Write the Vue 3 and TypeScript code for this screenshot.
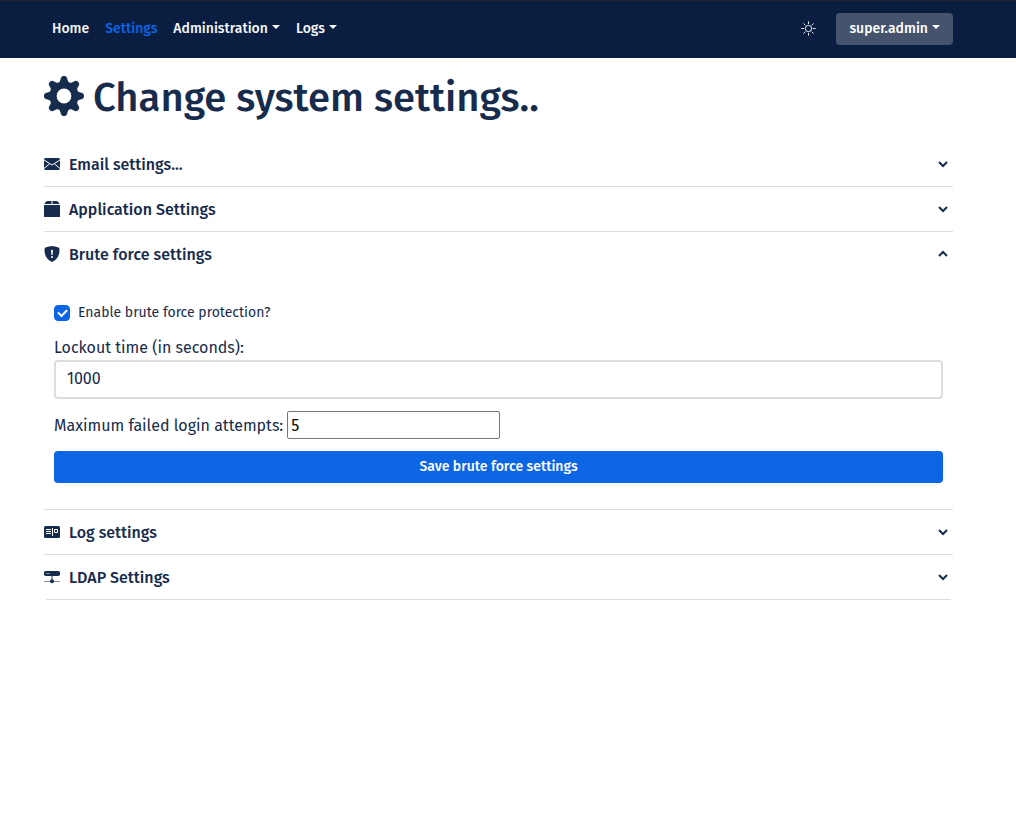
<script setup lang="ts">
import { ref } from 'vue'

interface Section {
  id: string
  title: string
}

const sections: Section[] = [
  { id: 'email', title: 'Email settings...' },
  { id: 'application', title: 'Application Settings' },
  { id: 'brute', title: 'Brute force settings' },
  { id: 'log', title: 'Log settings' },
  { id: 'ldap', title: 'LDAP Settings' },
]

const openSection = ref<string>('brute')
const bruteEnabled = ref<boolean>(true)
const lockoutTime = ref<string>('1000')
const maxAttempts = ref<string>('5')

function toggle(id: string): void {
  openSection.value = openSection.value === id ? '' : id
}

function gearOutline(): string {
  const points: string[] = []
  for (let i = 0; i < 240; i++) {
    const angle = (i / 240) * Math.PI * 2
    const radius = 17.3 + 3 * (Math.cos(8 * angle) - 0.11 * Math.cos(24 * angle))
    points.push(`${(20 + radius * Math.cos(angle)).toFixed(2)} ${(20 + radius * Math.sin(angle)).toFixed(2)}`)
  }
  return `M${points.join('L')}ZM27.4 20a7.4 7.4 0 1 0-14.8 0a7.4 7.4 0 1 0 14.8 0Z`
}
const gearPath = gearOutline()
</script>

<template>
  <header class="navbar">
    <nav class="links">
      <a href="#home">Home</a>
      <a href="#settings" class="active">Settings</a>
      <a href="#administration">Administration<span class="caret"></span></a>
      <a href="#logs">Logs<span class="caret"></span></a>
    </nav>
    <div class="tools">
      <button type="button" class="theme" aria-label="Toggle theme">
        <svg viewBox="0 0 16 16" width="15" height="15" fill="none" stroke="currentColor" stroke-linecap="round">
          <circle cx="8" cy="8" r="3.4" />
          <path d="M8 .8v2M8 13.2v2M.8 8h2M13.2 8h2M2.9 2.9l1.4 1.4M11.7 11.7l1.4 1.4M2.9 13.1l1.4-1.4M11.7 4.3l1.4-1.4" />
        </svg>
      </button>
      <button type="button" class="user">super.admin<span class="caret"></span></button>
    </div>
  </header>

  <main class="content">
    <h1>
      <svg class="gear" viewBox="0 0 40 40" width="40" height="40" aria-hidden="true">
        <path :d="gearPath" fill="currentColor" fill-rule="evenodd" />
      </svg>
      <span>Change system settings..</span>
    </h1>

    <div class="accordion">
      <section v-for="s in sections" :key="s.id" class="item">
        <button type="button" class="head" :aria-expanded="openSection === s.id" @click="toggle(s.id)">
          <svg class="icon" viewBox="0 0 16 16" width="16" height="16" aria-hidden="true">
            <template v-if="s.id === 'email'">
              <rect x="0" y="2" width="16" height="12" rx="1.5" fill="currentColor" />
              <path d="M0 4l8 5l8-5M0 12.5l5.5-4.6M16 12.5l-5.5-4.6" fill="none" stroke="#fff" />
            </template>
            <template v-else-if="s.id === 'application'">
              <path d="M3.5 0h4v3H0.2L2 .8Q2.700 0 3.500 0zM8.500 0H12.500Q13.300 0 14 .8L15.800 3H8.500zM0 4h16v11.500q0 .5-.5.5H.5q-.5 0-.5-.5z" fill="currentColor" />
            </template>
            <template v-else-if="s.id === 'brute'">
              <path d="M8 0C6.500 0 3.500 1 1.600 1.600C.9 1.800.6 2.100.6 2.800C0 8 2.300 13.500 8 16C13.700 13.500 16 8 15.400 2.800C15.400 2.100 15.100 1.800 14.400 1.600C12.500 1 9.500 0 8 0Z" fill="currentColor" />
              <path d="M7 4h2l-.4 5H7.400z" fill="#fff" />
              <circle cx="8" cy="11" r="1" fill="#fff" />
            </template>
            <template v-else-if="s.id === 'log'">
              <rect x="0" y="2" width="16" height="12" rx="1.500" fill="currentColor" />
              <path d="M2 5.500h5M2 7.500h5M2 9.500h5M8.500 4v8M10.500 5.500h3v3h-3z" fill="none" stroke="#fff" />
            </template>
            <template v-else>
              <rect x="0" y="2" width="16" height="5" rx="1.800" fill="currentColor" />
              <path d="M2 4.500h4" stroke="#8794a8" />
              <path d="M0 12.500h16" stroke="#7f8da2" />
              <path d="M8 7v5" stroke="currentColor" />
              <circle cx="8" cy="12.200" r="2" fill="currentColor" />
            </template>
          </svg>
          <span class="title">{{ s.title }}</span>
          <svg class="chevron" :class="{ up: openSection === s.id }" viewBox="0 0 10 10" width="10" height="10" aria-hidden="true">
            <path d="M1 3l4 4l4-4" fill="none" stroke="currentColor" stroke-width="2" />
          </svg>
        </button>

        <form v-if="s.id === 'brute' && openSection === 'brute'" class="body" @submit.prevent>
          <div class="check">
            <input id="enable" v-model="bruteEnabled" type="checkbox" />
            <label for="enable">Enable brute force protection?</label>
          </div>
          <label for="lockout" class="block">Lockout time (in seconds):</label>
          <input id="lockout" v-model="lockoutTime" type="text" class="wide" />
          <div class="attempts">
            <label for="attempts">Maximum failed login attempts:</label>
            <input id="attempts" v-model="maxAttempts" type="text" />
          </div>
          <button type="submit" class="save">Save brute force settings</button>
        </form>
      </section>
    </div>
  </main>
</template>

<style>
body {
  margin: 0;
  background: #fff;
}
</style>

<style scoped>
* {
  box-sizing: border-box;
}
.navbar,
.content,
button,
input {
  font-family: "Fira Sans", "Noto Sans", sans-serif;
}
.navbar {
  display: flex;
  align-items: center;
  justify-content: space-between;
  height: 58px;
  padding: 0 63px 2px 52px;
  border-top: 1px solid #212529;
  background: #0a1e42;
  font-size: 14px;
  font-weight: 500;
}
.links {
  display: flex;
  gap: 16px;
}
.links a {
  color: #f4f6f9;
  text-decoration: none;
}
.links a.active {
  color: #0d65e5;
}
.caret {
  display: inline-block;
  margin-left: 4px;
  vertical-align: 4px;
  border: 4px solid transparent;
  border-top-color: currentColor;
  border-bottom: 0;
}
.tools {
  display: flex;
  align-items: center;
  gap: 20px;
}
.theme {
  display: flex;
  padding: 0;
  border: 0;
  background: none;
  color: #f4f6f9;
}
.user {
  height: 32px;
  padding: 0 13px;
  border: 0;
  border-radius: 4px;
  background: #45536d;
  color: #fff;
  font-size: 14px;
  font-weight: 500;
}
.content {
  padding: 14px 63px 0 44px;
  color: #172b4d;
  font-size: 16px;
}
h1 {
  display: flex;
  align-items: center;
  gap: 9px;
  margin: 0 0 20px;
  font-size: 40px;
  font-weight: 500;
  line-height: 48px;
}
h1 span {
  padding-top: 2px;
}
.gear {
  margin-bottom: 2px;
}
.item {
  border-bottom: 1px solid #dadde3;
}
.item:last-child {
  margin: 0 2px;
}
.item:last-child .head {
  width: calc(100% + 4px);
  margin: 0 -2px;
}
.head {
  display: flex;
  align-items: center;
  width: 100%;
  height: 44px;
  padding: 0 5px 0 0;
  border: 0;
  background: none;
  color: inherit;
  font-size: 16px;
  font-weight: 500;
  text-align: left;
}
.icon {
  margin-right: 9px;
}
.title {
  flex: 1;
}
.chevron.up {
  transform: rotate(180deg);
}
.body {
  padding: 24px 10px 26px;
}
.check {
  display: flex;
  align-items: center;
  gap: 8px;
  height: 24px;
  margin-bottom: 12px;
  font-size: 14px;
}
.check input {
  display: grid;
  place-content: center;
  width: 16px;
  height: 16px;
  margin: 2px 0 0;
  border: 1px solid #0c66e4;
  border-radius: 4px;
  appearance: none;
}
.check input:checked {
  background: #0c66e4;
}
.check input:checked::before {
  content: "";
  width: 7px;
  height: 4px;
  margin-bottom: 2px;
  border: solid #fff;
  border-width: 0 0 2px 2px;
  transform: rotate(-45deg);
}
.block {
  display: block;
  line-height: 24px;
}
.wide {
  display: block;
  width: 100%;
  height: 39px;
  padding: 0 11px 2px;
  border: 2px solid #dadde2;
  border-radius: 4px;
  background: #fff;
  color: #172b4d;
  font-size: 16px;
}
.attempts {
  display: flex;
  align-items: center;
  gap: 4px;
  margin: 12px 0;
}
.attempts input {
  width: 213px;
  height: 28px;
  padding: 1px 3px;
  border: 1px solid #767676;
  border-radius: 2px;
  background: #fff;
  color: #000;
  font-size: 16px;
}
.save {
  display: block;
  width: 100%;
  height: 32px;
  padding: 0 0 2px;
  border: 0;
  border-radius: 4px;
  background: #0c66e4;
  color: #fff;
  font-size: 14px;
  font-weight: 500;
}
</style>
